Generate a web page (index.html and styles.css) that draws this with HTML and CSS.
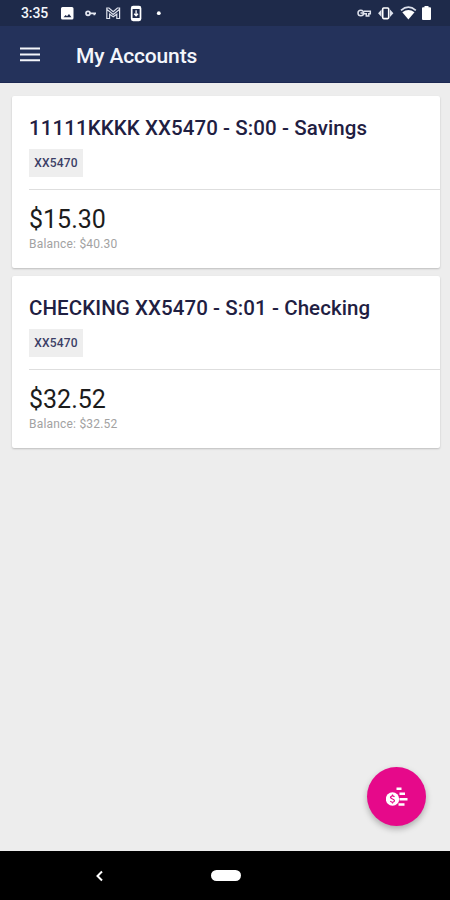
FILE: index.html
```html
<!DOCTYPE html>
<html lang="en">
<head>
<meta charset="utf-8">
<title>My Accounts</title>
<link rel="stylesheet" href="styles.css">
</head>
<body>
<div class="status">
  <span class="clock">3:35</span>
  <svg class="left-icons" width="102" height="26" viewBox="61 0 102 26">
    <path fill="#fff" fill-rule="evenodd" d="M62.500 7h9.500q1.500 0 1.500 1.500v9.500q0 1.500-1.500 1.500h-9.500q-1.500 0-1.500-1.500v-9.500q0-1.500 1.500-1.500zM63.500 17.300h8l-2.500-3.300-2 2.300-1.300-1.300z"/>
    <circle cx="88" cy="13.300" r="2" fill="none" stroke="#e4e7f0" stroke-width="1.700"/>
    <path d="M90 13.300h6M94.300 13.300v2" fill="none" stroke="#e4e7f0" stroke-width="1.800"/>
    <path d="M106.800 18.500V8h2.200l4.200 3.600L117.400 8h2.200v10.500h-2.800v-4.300l-3.600 2.600-3.600-2.600v4.300zM107 9.500l6.200 5 6.200-5" fill="none" stroke="#dde1ec" stroke-width="1.200"/>
    <rect x="131.700" y="6.700" width="8.800" height="13.600" rx="1.500" fill="none" stroke="#fff" stroke-width="1.700"/>
    <path d="M132 8h8M132 19h8" stroke="#fff" stroke-width="1.800"/>
    <path d="M136.100 10.300v5.500M134.200 13.800l1.900 2 1.900-2" fill="none" stroke="#fff" stroke-width="1.300"/>
    <circle cx="158.800" cy="13.200" r="1.900" fill="#fff"/>
  </svg>
  <svg class="right-icons" width="75" height="26" viewBox="357 0 75 26">
    <g fill="none" stroke="#dde1ec" stroke-width="1.500">
      <circle cx="360.800" cy="13" r="2.800"/>
      <path d="M360.500 13h3M364 11.200h6.300v2.500h-1.500v2.300h-2.500v-2.300h-3"/>
    </g>
    <rect x="382.700" y="8" width="6" height="10.600" rx="1" fill="none" stroke="#fff" stroke-width="1.600"/>
    <path d="M381.500 9.500v7.600l-3.400-3.800zM390 9.500v7.600l3.400-3.800z" fill="#dde1ec"/>
    <path d="M401 10.300q7.400-6.500 14.800 0" fill="none" stroke="#dde1ec" stroke-width="1.700"/>
    <path d="M402.300 12.200q6.100-4.500 12.200 0l-6.100 7.300z" fill="#fff"/>
    <path d="M424.500 7.300V6h4v1.300h1.500q1 0 1 1V19q0 1-1 1h-7q-1 0-1-1V8.300q0-1 1-1z" fill="#fff"/>
  </svg>
</div>
<header class="appbar">
  <svg width="20" height="15" viewBox="0 0 20 15"><path d="M0 1.500h20M0 7.500h20M0 13.300h20" stroke="#f4f6fb" stroke-width="1.900"/></svg>
  <h1>My Accounts</h1>
</header>
<main>
  <section class="card">
    <div class="head">
      <h2>11111KKKK XX5470 - S:00 - Savings</h2>
      <span class="tag">XX5470</span>
    </div>
    <div class="body">
      <div class="amount">$15.30</div>
      <div class="balance">Balance: $40.30</div>
    </div>
  </section>
  <section class="card">
    <div class="head">
      <h2>CHECKING XX5470 - S:01 - Checking</h2>
      <span class="tag">XX5470</span>
    </div>
    <div class="body">
      <div class="amount">$32.52</div>
      <div class="balance">Balance: $32.52</div>
    </div>
  </section>
</main>
<div class="fab">
  <svg width="22" height="20" viewBox="385.500 786.500 22 20">
    <path d="M396 788.200h5M399 793.300h5.500M399 798.700h8M398 804h6" stroke="#fff" stroke-width="2.500"/>
    <circle cx="392" cy="798.500" r="6.700" fill="#fff"/>
    <path d="M394 796.300q-1.900-1.500-3.500-.4t1.500 2.600q2.900 1.300 1.500 2.700t-3.700-.4M392 794v1.500M392 801.500v1.500" fill="none" stroke="#e6098a" stroke-width="1.200"/>
  </svg>
</div>
<nav>
  <svg class="back" width="8" height="12" viewBox="0 0 8 12"><path d="M7 1.500L2.500 6 7 10.500" fill="none" stroke="#fff" stroke-width="2"/></svg>
  <span class="pill"></span>
</nav>
</body>
</html>
```
FILE: styles.css
```css
* { box-sizing: border-box; }
body {
  margin: 0;
  width: 450px;
  height: 900px;
  display: flex;
  flex-direction: column;
  background: #ededed;
  font-family: Roboto, sans-serif;
  overflow: hidden;
}
.status {
  height: 26px;
  flex: none;
  background: #1e2a4a;
  display: flex;
  align-items: center;
  padding: 0 18px 0 21px;
}
.clock {
  width: 40px;
  font-size: 14px;
  font-weight: 500;
  line-height: 26px;
  letter-spacing: -.1px;
  color: #f4f6fb;
}
.right-icons { margin-left: auto; }
.appbar {
  height: 57px;
  flex: none;
  background: #24325b;
  border-bottom: 1px solid #1c2852;
  display: flex;
  align-items: center;
  gap: 36px;
  padding: 1px 0 0 20px;
}
h1 {
  margin: 0;
  padding-top: 2px;
  font-size: 21px;
  font-weight: 500;
  line-height: 28px;
  letter-spacing: -.15px;
  color: #f4f6fb;
}
main {
  flex: 1;
  padding: 13px 10.500px 0 12px;
  display: flex;
  flex-direction: column;
  gap: 8px;
}
.card {
  height: 172px;
  background: #fff;
  border-radius: 2px;
  box-shadow: 0 1px 2px rgba(0, 0, 0, .2);
  padding-left: 17px;
}
.head {
  height: 94px;
  padding-top: 19px;
  border-bottom: 1px solid #dedede;
}
h2 {
  margin: 0;
  font-size: 20.5px;
  font-weight: 500;
  line-height: 27px;
  letter-spacing: .08px;
  color: #1f2042;
  white-space: nowrap;
}
.tag {
  display: block;
  width: 54px;
  height: 28px;
  margin-top: 7px;
  background: #eee;
  font-size: 12px;
  line-height: 28px;
  font-weight: 500;
  letter-spacing: .2px;
  text-align: center;
  color: #3c3e66;
}
.body { padding-top: 15px; }
.amount {
  font-size: 25px;
  line-height: 30px;
  color: #1c1c1c;
}
.balance {
  margin-top: 1px;
  font-size: 12px;
  line-height: 16px;
  letter-spacing: .2px;
  color: #a2a2a2;
}
.fab {
  position: absolute;
  left: 367px;
  top: 767px;
  width: 59px;
  height: 59px;
  border-radius: 50%;
  background: #e6098a;
  box-shadow: 0 3px 6px rgba(0, 0, 0, .28);
  display: flex;
  align-items: center;
  justify-content: center;
}
nav {
  height: 49px;
  flex: none;
  background: #000;
  display: flex;
  align-items: center;
  padding-left: 95px;
}
.pill {
  width: 30px;
  height: 11px;
  margin-left: 108px;
  border-radius: 6px;
  background: #fff;
}
```
